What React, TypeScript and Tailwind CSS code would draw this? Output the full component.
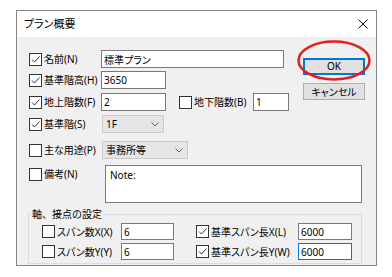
import type { ReactNode } from "react"

const ui = "font-[family-name:'Noto_Sans','Noto_Sans_CJK_JP',sans-serif] [font-feature-settings:'palt']"

function Check({ checked }: { checked?: boolean }) {
  return (
    <span className="w-[13px] h-[13px] shrink-0 border border-[#333333] bg-white flex items-center justify-center">
      {checked && (
        <svg width="11" height="11" viewBox="0 0 11 11" fill="none" stroke="#333" strokeWidth="1">
          <path d="M2 5.5 L4.5 8 L9.5 2.5" />
        </svg>
      )}
    </span>
  )
}

function CheckLabel({ checked, children }: { checked?: boolean; children: ReactNode }) {
  return (
    <label className="flex items-center gap-[2px] text-[10px] leading-none text-black whitespace-nowrap">
      <Check checked={checked} />
      <span>{children}</span>
    </label>
  )
}

function Field({ value, className = "", focus }: { value: string; className?: string; focus?: boolean }) {
  return (
    <input
      readOnly
      value={value}
      className={`h-full bg-white px-[2px] text-[10px] text-black outline-none border ${
        focus ? "border-[#0078d7]" : "border-[#7a7a7a]"
      } ${className}`}
    />
  )
}

function Combo({ value, className = "" }: { value: string; className?: string }) {
  return (
    <div
      className={`h-[18px] flex items-center justify-between bg-[#e5e5e5] border border-[#cccccc] pl-[3px] pr-[4px] text-[10px] text-black ${className}`}
    >
      <span>{value}</span>
      <svg width="8" height="5" viewBox="0 0 8 5" fill="none" stroke="#606060" strokeWidth="1">
        <path d="M0.5 0.5 L4 4 L7.5 0.5" />
      </svg>
    </div>
  )
}

export default function App() {
  return (
    <div className={`min-h-screen bg-white pt-[10px] pl-[16px] ${ui}`}>
      <div className="w-[361px] h-[256px] border border-[#868686] flex flex-col">
        {/* タイトルバー */}
        <div className="h-[26px] bg-white flex items-center justify-between pl-[7px] pr-[8px]">
          <span className="text-[11px] text-black">プラン概要</span>
          <svg width="10" height="10" viewBox="0 0 10 10" stroke="#111" strokeWidth="1">
            <path d="M0.5 0.5 L9.5 9.5 M9.5 0.5 L0.5 9.5" />
          </svg>
        </div>

        <div className="flex-1 bg-[#f0f0f0] pl-[12px] pr-[11px]">
          <div className="flex">
            <div className="w-[274px] flex flex-col">
              <div className="flex items-center h-[18px] mt-[13px]">
                <div className="w-[72px]">
                  <CheckLabel checked>名前(N)</CheckLabel>
                </div>
                <Field value="標準プラン" className="w-[183px]" />
              </div>

              <div className="flex items-center h-[18px] mt-[3px]">
                <div className="w-[72px]">
                  <CheckLabel checked>基準階高(H)</CheckLabel>
                </div>
                <Field value="3650" className="w-[65px]" />
              </div>

              <div className="flex items-center h-[18px] mt-[4px]">
                <div className="w-[72px]">
                  <CheckLabel checked>地上階数(F)</CheckLabel>
                </div>
                <Field value="2" className="w-[65px]" />
                <div className="ml-[13px] w-[74px]">
                  <CheckLabel>地下階数(B)</CheckLabel>
                </div>
                <Field value="1" className="w-[36px]" />
              </div>

              <div className="flex items-center h-[18px] mt-[4px]">
                <div className="w-[73px]">
                  <CheckLabel checked>基準階(S)</CheckLabel>
                </div>
                <Combo value="1F" className="w-[62px]" />
              </div>

              <div className="flex items-center h-[18px] mt-[8px]">
                <div className="w-[73px]">
                  <CheckLabel>主な用途(P)</CheckLabel>
                </div>
                <Combo value="事務所等" className="w-[86px]" />
              </div>
            </div>

            {/* ボタン */}
            <div className="w-[62px] flex flex-col gap-[7px] pt-[15px]">
              <div className="relative">
                <button className="w-full h-[17px] bg-[#e1e1e1] border-2 border-[#0078d7] text-[10px] leading-none text-black">
                  OK
                </button>
                <svg
                  className="absolute -left-[6px] -top-[12px] pointer-events-none"
                  width="74"
                  height="41"
                  viewBox="0 0 74 41"
                  fill="none"
                >
                  <ellipse cx="37" cy="20.5" rx="35.5" ry="19" stroke="#e31e1e" strokeWidth="2.5" />
                </svg>
              </div>
              <button className="w-full h-[17px] bg-[#e1e1e1] border border-[#adadad] text-[10px] leading-none text-black">
                キャンセル
              </button>
            </div>
          </div>

          {/* 備考 */}
          <div className="flex items-start mt-[6px] mr-[3px]">
            <div className="w-[76px] h-[18px] flex items-center">
              <CheckLabel>備考(N)</CheckLabel>
            </div>
            <textarea
              readOnly
              value="Note:"
              className="flex-1 h-[38px] resize-none bg-white border border-[#7a7a7a] px-[4px] py-[2px] text-[10px] text-black outline-none"
            />
          </div>

          {/* 軸、接点の設定 */}
          <div className="relative mt-[11px] -ml-[1px] mr-[3px] h-[50px] border border-[#dcdcdc] pl-[13px] pt-[8px] flex flex-col gap-[3px]">
            <span className="absolute left-[2px] -top-[8px] px-[1px] bg-[#f0f0f0] text-[10px] leading-[14px] text-black [font-feature-settings:normal]">
              軸、接点の設定
            </span>
            <div className="flex items-center h-[17px]">
              <div className="w-[79px]">
                <CheckLabel>スパン数X(X)</CheckLabel>
              </div>
              <Field value="6" className="w-[53px]" />
              <div className="ml-[22px] w-[102px]">
                <CheckLabel checked>基準スパン長X(L)</CheckLabel>
              </div>
              <Field value="6000" className="w-[54px]" />
            </div>
            <div className="flex items-center h-[17px]">
              <div className="w-[79px]">
                <CheckLabel>スパン数Y(Y)</CheckLabel>
              </div>
              <Field value="6" className="w-[53px]" />
              <div className="ml-[22px] w-[102px]">
                <CheckLabel checked>基準スパン長Y(W)</CheckLabel>
              </div>
              <Field value="6000" focus className="w-[54px]" />
            </div>
          </div>
        </div>
      </div>
    </div>
  )
}
